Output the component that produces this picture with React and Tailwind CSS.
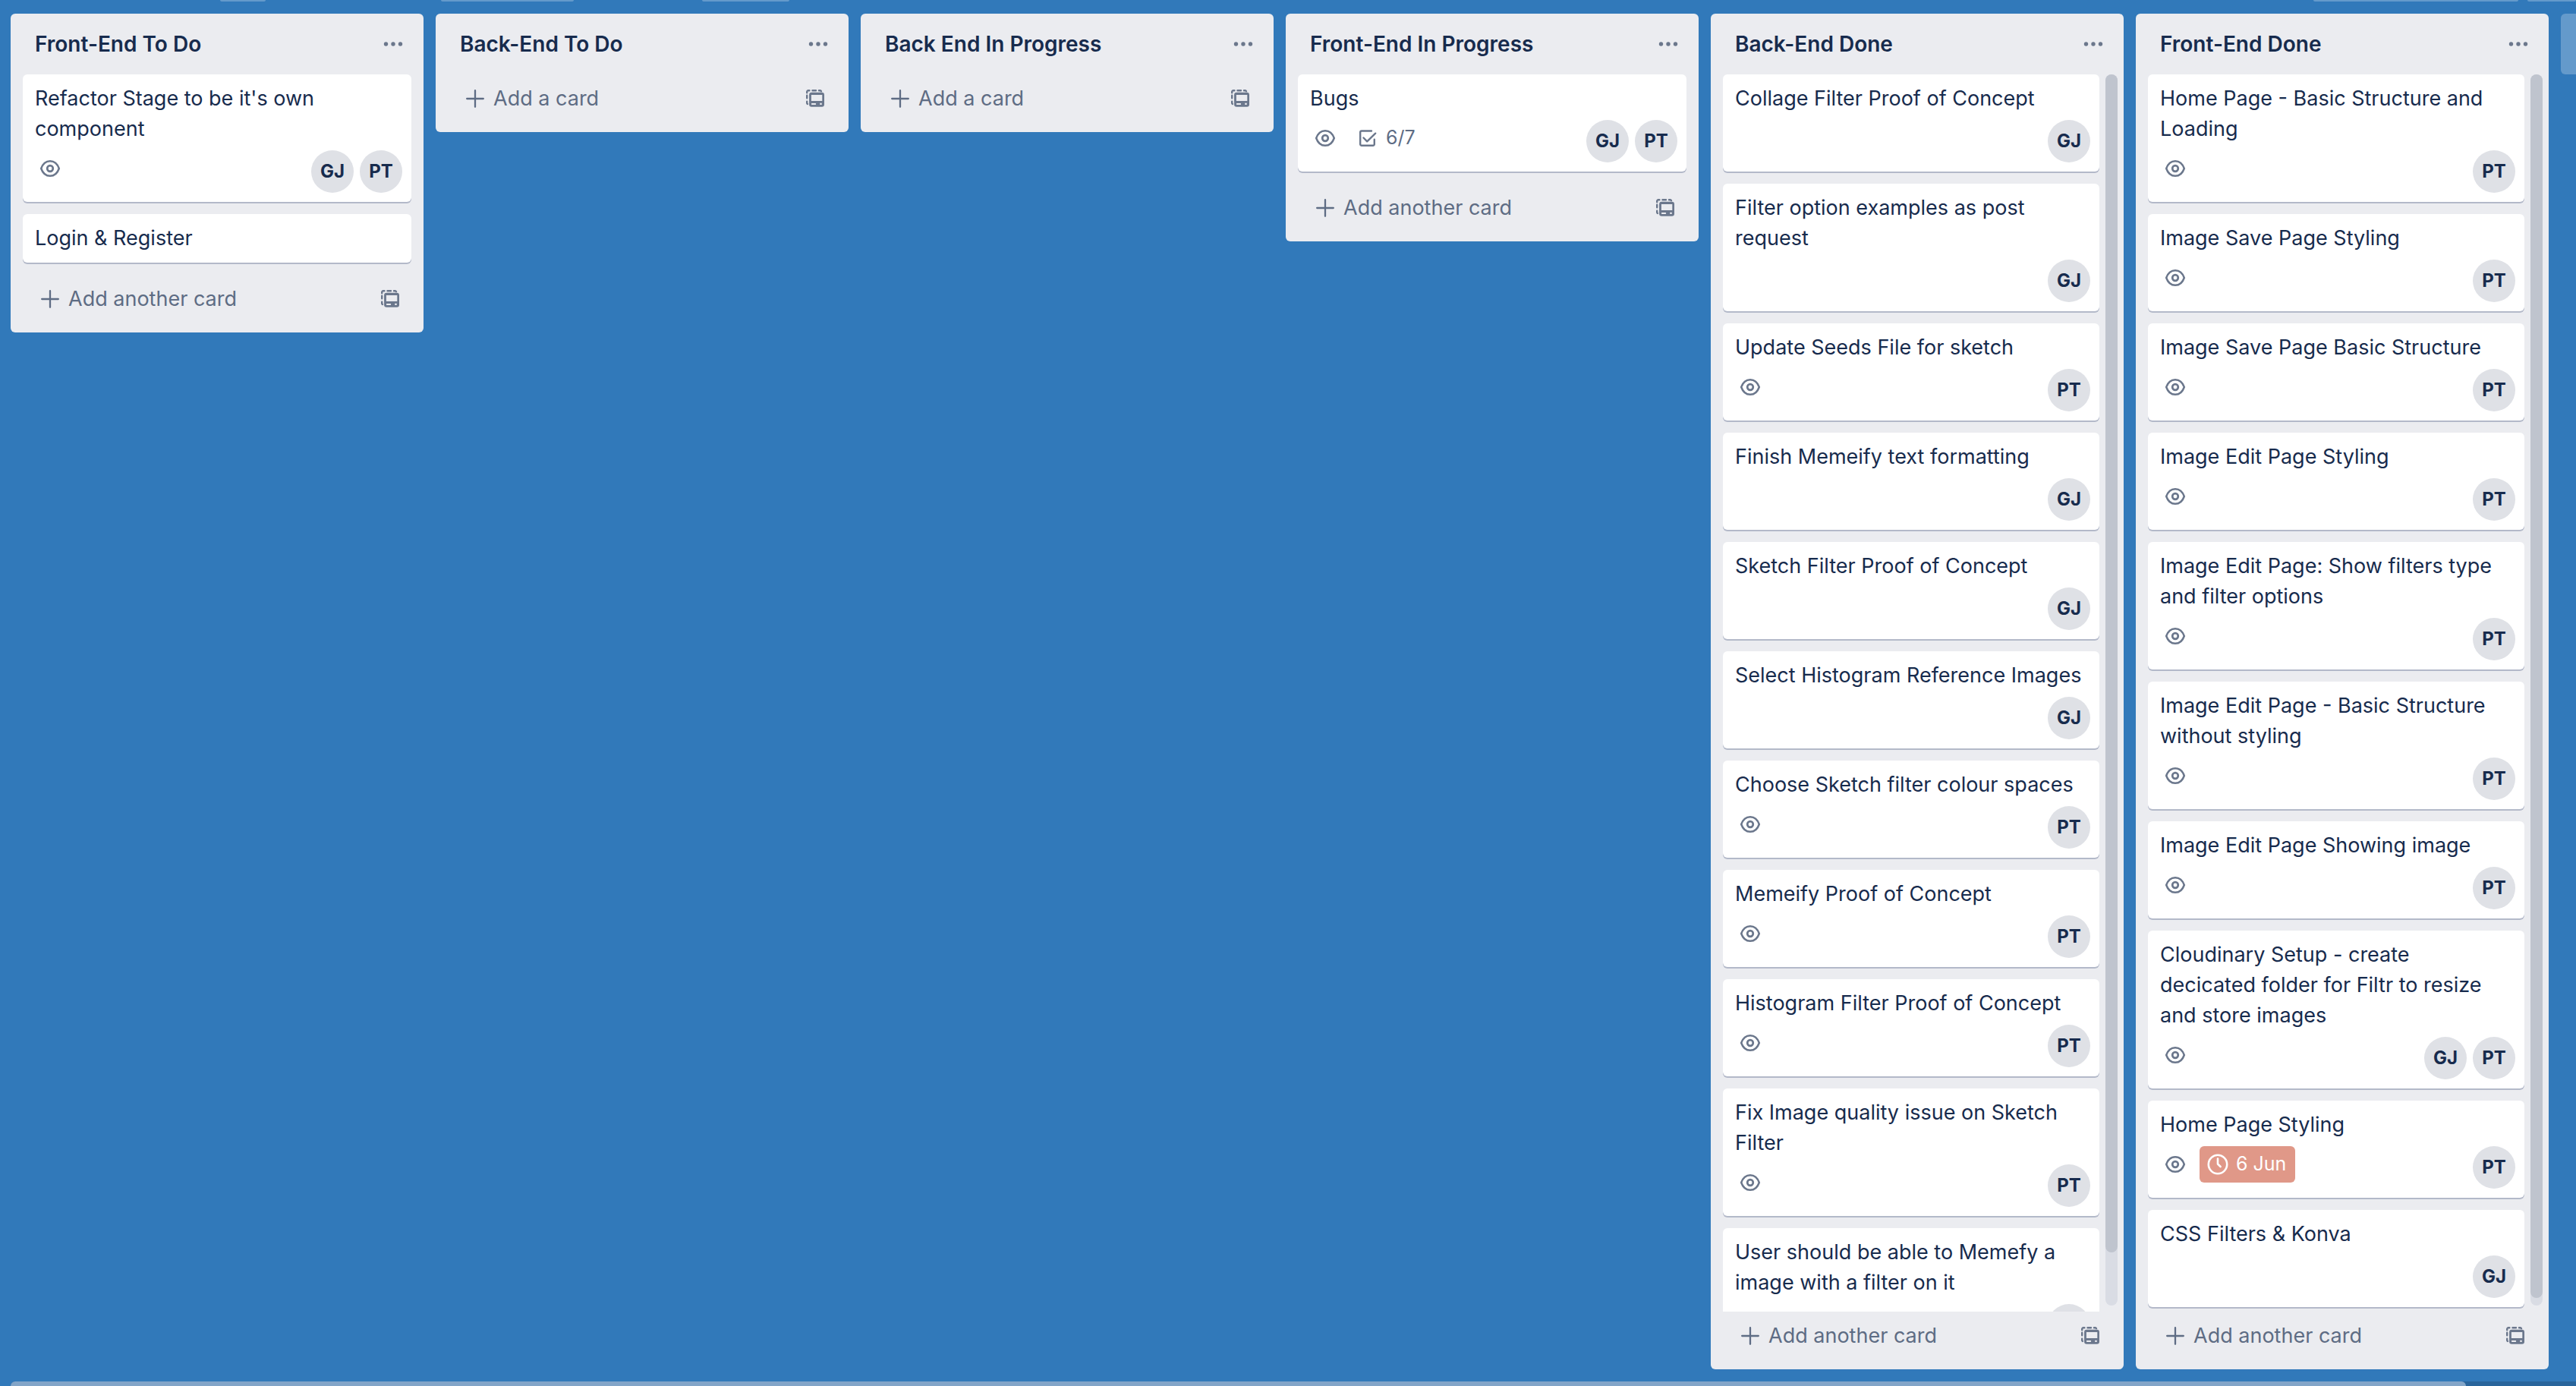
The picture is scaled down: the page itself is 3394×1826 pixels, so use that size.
const GJ = "GJ";
const PT = "PT";

// `scroll` is the length of the scrollbar thumb, in percent of its track.
const LISTS = [
  {
    title: "Front-End To Do",
    cards: [
      { title: "Refactor Stage to be it's own component", watching: true, members: [GJ, PT] },
      { title: "Login & Register" },
    ],
  },
  { title: "Back-End To Do", cards: [] },
  { title: "Back End In Progress", cards: [] },
  {
    title: "Front-End In Progress",
    cards: [{ title: "Bugs", watching: true, checklist: "6/7", members: [GJ, PT] }],
  },
  {
    title: "Back-End Done",
    scroll: 95.7,
    cards: [
      { title: "Collage Filter Proof of Concept", members: [GJ] },
      { title: "Filter option examples as post request", members: [GJ] },
      { title: "Update Seeds File for sketch", watching: true, members: [PT] },
      { title: "Finish Memeify text formatting", members: [GJ] },
      { title: "Sketch Filter Proof of Concept", members: [GJ] },
      { title: "Select Histogram Reference Images", members: [GJ] },
      { title: "Choose Sketch filter colour spaces", watching: true, members: [PT] },
      { title: "Memeify Proof of Concept", watching: true, members: [PT] },
      { title: "Histogram Filter Proof of Concept", watching: true, members: [PT] },
      { title: "Fix Image quality issue on Sketch Filter", watching: true, members: [PT] },
      { title: "User should be able to Memefy a image with a filter on it", members: [GJ] },
    ],
  },
  {
    title: "Front-End Done",
    scroll: 99.4,
    cards: [
      { title: "Home Page - Basic Structure and Loading", watching: true, members: [PT] },
      { title: "Image Save Page Styling", watching: true, members: [PT] },
      { title: "Image Save Page Basic Structure", watching: true, members: [PT] },
      { title: "Image Edit Page Styling", watching: true, members: [PT] },
      { title: "Image Edit Page: Show filters type and filter options", watching: true, members: [PT] },
      { title: "Image Edit Page - Basic Structure without styling", watching: true, members: [PT] },
      { title: "Image Edit Page Showing image", watching: true, members: [PT] },
      {
        title: "Cloudinary Setup - create decicated folder for Filtr to resize and store images",
        watching: true,
        members: [GJ, PT],
      },
      { title: "Home Page Styling", watching: true, due: "6 Jun", members: [PT] },
      { title: "CSS Filters & Konva", members: [GJ] },
    ],
  },
];

function EyeIcon() {
  return (
    <svg viewBox="0 0 32 32" className="size-8" fill="none" stroke="currentColor" role="img" aria-label="Watching">
      <path
        d="M4.2 16C6.4 9.6 11 6.2 16 6.2S25.6 9.6 27.8 16C25.6 22.4 21 25.8 16 25.8S6.4 22.4 4.2 16Z"
        strokeWidth="2.5"
        strokeLinejoin="round"
      />
      <circle cx="16" cy="16" r="3.8" strokeWidth="2.7" />
    </svg>
  );
}

function ChecklistIcon() {
  return (
    <svg viewBox="0 0 32 32" className="size-8" fill="none" stroke="currentColor" strokeWidth="2.4" strokeLinecap="round" strokeLinejoin="round" aria-hidden="true">
      <path d="M21 6.500H8a1.800 1.800 0 0 0-1.800 1.800V24a1.800 1.800 0 0 0 1.800 1.800H23a1.800 1.800 0 0 0 1.800-1.800V17.800" />
      <path d="M10.500 15.500L15.200 20.300L26.200 9.700" />
    </svg>
  );
}

function ClockIcon() {
  return (
    <svg viewBox="0 0 32 32" className="size-8" fill="none" stroke="currentColor" strokeWidth="2.6" strokeLinecap="round" strokeLinejoin="round" aria-hidden="true">
      <circle cx="16" cy="16" r="12.2" />
      <path d="M16 8.600V15.500L19.600 19" />
    </svg>
  );
}

function PlusIcon() {
  return (
    <svg viewBox="0 0 32 32" className="size-8" fill="none" stroke="currentColor" strokeWidth="2.3" strokeLinecap="round" aria-hidden="true">
      <path d="M16 5.200V26.800M5.200 16H26.800" />
    </svg>
  );
}

function DotsIcon() {
  return (
    <svg viewBox="0 0 32 32" className="size-8" fill="currentColor" aria-hidden="true">
      <circle cx="6.5" cy="16" r="2.7" />
      <circle cx="16" cy="16" r="2.7" />
      <circle cx="25.5" cy="16" r="2.7" />
    </svg>
  );
}

function TemplateIcon() {
  return (
    <svg viewBox="0 0 32 32" className="size-8" fill="none" stroke="currentColor" aria-hidden="true">
      <path
        d="M5.200 8.200V7A1.800 1.800 0 0 1 7 5.200H8.400M12.500 5.200H17M21 5.200H22.500A1.800 1.800 0 0 1 24 6.200M5.200 11.800V15.200M5.200 19.800V21.800A1.600 1.600 0 0 0 6 23"
        strokeWidth="2.4"
        strokeLinecap="round"
      />
      <path
        fill="currentColor"
        stroke="none"
        fillRule="evenodd"
        d="M11.300 7.800H24.800A3.200 3.200 0 0 1 28 11V23.600A3.200 3.200 0 0 1 24.800 26.800H11.300A3.200 3.200 0 0 1 8.100 23.600V11A3.200 3.200 0 0 1 11.300 7.800ZM10.900 11V19H25.300V11ZM11.600 21.900A.6.6 0 0 0 11 22.500V23.300A.6.6 0 0 0 11.600 23.900H16.500A.6.6 0 0 0 17.100 23.300V22.500A.6.6 0 0 0 16.500 21.900ZM22.300 21.800V24H24.700V21.800Z"
      />
    </svg>
  );
}

function Card({ card }) {
  return (
    <article className="shrink-0 rounded-md bg-white py-3 pr-5 pl-4 shadow-[0_2px_0_#b3b9c9]">
      <h3 className="leading-10">{card.title}</h3>
      {card.members && (
        <div className="-mr-2 mt-2 flex h-14 items-start justify-between">
          <div className="flex gap-3 text-[#6b778c]">
            {card.watching && (
              <span className="p-1 pt-2">
                <EyeIcon />
              </span>
            )}
            {card.checklist && (
              <span className="flex h-12 items-center gap-2 px-2 text-[25px]">
                <ChecklistIcon />
                <span className="text-[#5e6c84]">{card.checklist}</span>
              </span>
            )}
            {card.due && (
              <span className="flex h-12 items-center gap-2 rounded-md bg-[#e09888] pr-3 pl-2 text-[25px] text-white">
                <ClockIcon />
                {card.due}
              </span>
            )}
          </div>
          <div className="flex gap-2">
            {card.members.map((m) => (
              <button key={m} type="button" className="size-14 rounded-full bg-[#dfe1e6] text-2xl font-bold">
                {m}
              </button>
            ))}
          </div>
        </div>
      )}
    </article>
  );
}

function List({ list }) {
  return (
    <section className="flex max-h-full w-[544px] shrink-0 flex-col rounded-md bg-[#ebecf0] pb-3">
      <header className="flex h-20 shrink-0 items-center justify-between pr-6 pl-8">
        <h2 className="text-[28px] font-semibold">{list.title}</h2>
        <button type="button" aria-label="List actions" className="text-[#6b778c]">
          <DotsIcon />
        </button>
      </header>
      {list.cards.length > 0 && (
        <div className={`flex min-h-0 gap-2 pl-4 ${list.scroll ? "pr-2" : "pr-4"}`}>
          <div className="flex min-w-0 flex-1 flex-col gap-4 overflow-hidden pb-4">
            {list.cards.map((card) => (
              <Card key={card.title} card={card} />
            ))}
          </div>
          {list.scroll && (
            <div className="mb-2 w-4 rounded-full bg-[#d9dce4]">
              <div className="w-4 rounded-full bg-[#bfc4ce]" style={{ height: `${list.scroll}%` }} />
            </div>
          )}
        </div>
      )}
      <footer className="flex h-16 shrink-0 items-center justify-between pr-7 pl-9 text-[#5e6c84]">
        <button type="button" className="flex items-center gap-2">
          <PlusIcon />
          {list.cards.length ? "Add another card" : "Add a card"}
        </button>
        <button type="button" aria-label="Create from template" className="text-[#6b778c]">
          <TemplateIcon />
        </button>
      </footer>
    </section>
  );
}

export default function App() {
  return (
    <div className="flex h-screen flex-col overflow-hidden bg-[#3179ba] font-[Inter,sans-serif] text-[27px] text-[#172b4d]">
      <div className="flex h-0.5 shrink-0 *:rounded-b-sm *:bg-white/25">
        <span className="ml-[290px] w-[60px]" />
        <span className="ml-[231px] w-[175px]" />
        <span className="ml-[169px] w-[115px]" />
        <span className="mr-3 ml-auto w-[270px]" />
        <span className="w-16" />
      </div>
      <main className="flex min-h-0 flex-1 items-start gap-4 overflow-hidden px-[14px] py-4">
        {LISTS.map((list) => (
          <List key={list.title} list={list} />
        ))}
        <button type="button" aria-label="Add another list" className="h-20 w-[544px] shrink-0 rounded-md bg-white/25" />
      </main>
      <div className="ml-[14px] h-1.5 shrink-0 rounded-tl-md bg-[#29659c]">
        <div className="h-1.5 w-[95.7%] rounded-t-md bg-[#83a5c8]" />
      </div>
    </div>
  );
}
